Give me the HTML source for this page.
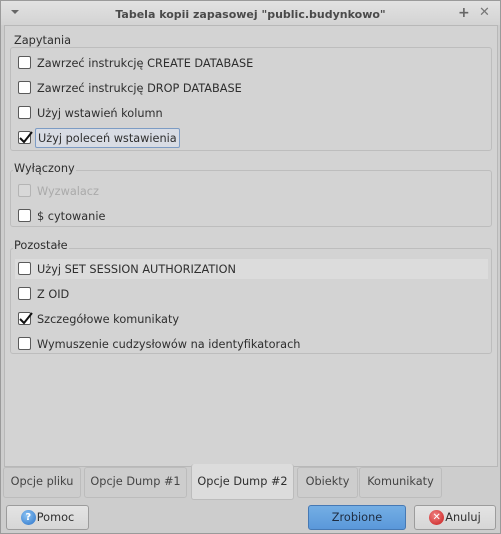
<!DOCTYPE html>
<html><head><meta charset="utf-8"><style>
*{box-sizing:border-box;margin:0;padding:0}
body{width:501px;height:534px;background:#cdcdcd;font-family:"DejaVu Sans","Liberation Sans",sans-serif;font-size:11.3px;color:#2e2e2e;position:relative;overflow:hidden;border:1px solid #9a9a9a}
.abs{position:absolute}
.title{left:0;top:0;width:499px;height:24px;background:linear-gradient(#e2e2e2,#d3d3d3);font-weight:bold;font-size:11px;color:#4a4a4a;text-align:center;line-height:27px}
.pane{left:3px;top:24px;width:494px;height:442px;border:1px solid #b8b8b8;background:#d3d3d3}
.frame{border:1px solid #bdbdbd;border-radius:3px}
.lbl{background:#d3d3d3;padding:0 1px}
.cb{width:13px;height:13px;border:1px solid #5a5a5a;border-radius:2px;background:#fff}
.cb.dis{border-color:#b4b4b4;background:#d8d8d8}
.row{left:17px;height:16px}
.row span{position:absolute;left:19px;top:1px;white-space:nowrap;line-height:14px}
.tab{top:466px;height:31px;border:1px solid #bcbcbc;border-radius:3px;background:#cdcdcd;text-align:center;line-height:28px;color:#444}
.btn{top:504px;height:25px;border:1px solid #9c9c9c;border-radius:3px;background:linear-gradient(#e4e4e4,#d6d6d6);display:flex;align-items:center;justify-content:center;gap:1px}
.ic{display:inline-block;width:15px;height:15px;border-radius:8px;color:#fff;font-size:10px;line-height:15px;font-weight:bold;text-align:center}
</style></head><body>
<div class="abs title">Tabela kopii zapasowej "public.budynkowo"</div>
<div class="abs" style="left:10px;top:9px;width:0;height:0;border-left:4px solid transparent;border-right:4px solid transparent;border-top:4px solid #666"></div>
<div class="abs" style="left:457px;top:4px;font-size:14px;color:#666;font-weight:bold">+</div>
<div class="abs" style="left:478px;top:4px;font-size:13px;color:#777;font-weight:bold">✕</div>
<div class="abs pane"></div>

<div class="abs frame" style="left:9px;top:46px;width:482px;height:104px"></div>
<div class="abs lbl" style="left:12px;top:33px">Zapytania</div>
<div class="abs row" style="top:55px"><div class="cb"></div><span>Zawrzeć instrukcję CREATE DATABASE</span></div>
<div class="abs row" style="top:80px"><div class="cb"></div><span>Zawrzeć instrukcję DROP DATABASE</span></div>
<div class="abs row" style="top:105px"><div class="cb"></div><span>Użyj wstawień kolumn</span></div>
<div class="abs row" style="top:130px"><div class="cb" style="position:relative"><svg class="abs" style="left:-1px;top:-2px" width="15" height="15"><path d="M2 8 L6 12 L14 2" stroke="#111" stroke-width="2" fill="none"/></svg></div><span style="left:17px;top:-3px;border:1px solid #7d9cc4;border-radius:2px;padding:3px 2px 1px;line-height:14px;background:#d8dce4">Użyj poleceń wstawienia</span></div>

<div class="abs frame" style="left:9px;top:169px;width:482px;height:57px"></div>
<div class="abs lbl" style="left:12px;top:161px">Wyłączony</div>
<div class="abs row" style="top:183px"><div class="cb dis"></div><span style="color:#aaa">Wyzwalacz</span></div>
<div class="abs row" style="top:208px"><div class="cb"></div><span>$ cytowanie</span></div>

<div class="abs frame" style="left:9px;top:247px;width:482px;height:106px"></div>
<div class="abs lbl" style="left:12px;top:238px">Pozostałe</div>
<div class="abs" style="left:14px;top:258px;width:473px;height:20px;background:#dcdcdc"></div>
<div class="abs row" style="top:261px"><div class="cb"></div><span>Użyj SET SESSION AUTHORIZATION</span></div>
<div class="abs row" style="top:286px"><div class="cb"></div><span>Z OID</span></div>
<div class="abs row" style="top:311px"><div class="cb" style="position:relative"><svg class="abs" style="left:-1px;top:-2px" width="15" height="15"><path d="M2 8 L6 12 L14 2" stroke="#111" stroke-width="2" fill="none"/></svg></div><span>Szczegółowe komunikaty</span></div>
<div class="abs row" style="top:336px"><div class="cb"></div><span>Wymuszenie cudzysłowów na identyfikatorach</span></div>

<div class="abs tab" style="left:2px;width:78px">Opcje pliku</div>
<div class="abs tab" style="left:83px;width:103px">Opcje Dump #1</div>
<div class="abs tab" style="left:190px;width:103px;top:463px;height:36px;background:#dcdcdc;border-top:none;line-height:36px;color:#2e2e2e">Opcje Dump #2</div>
<div class="abs tab" style="left:296px;width:61px">Obiekty</div>
<div class="abs tab" style="left:358px;width:83px">Komunikaty</div>

<div class="abs btn" style="left:5px;width:83px"><span class="ic" style="background:radial-gradient(circle at 40% 35%,#8cc4f4,#2a72c8)">?</span>Pomoc</div>
<div class="abs btn" style="left:307px;width:98px;background:linear-gradient(#74aee4,#5a98da);border-color:#4679b4;color:#1e2c40">Zrobione</div>
<div class="abs btn" style="left:413px;width:82px"><span class="ic" style="background:radial-gradient(circle at 40% 35%,#f08080,#c81e1e)">✕</span>Anuluj</div>
</body></html>
